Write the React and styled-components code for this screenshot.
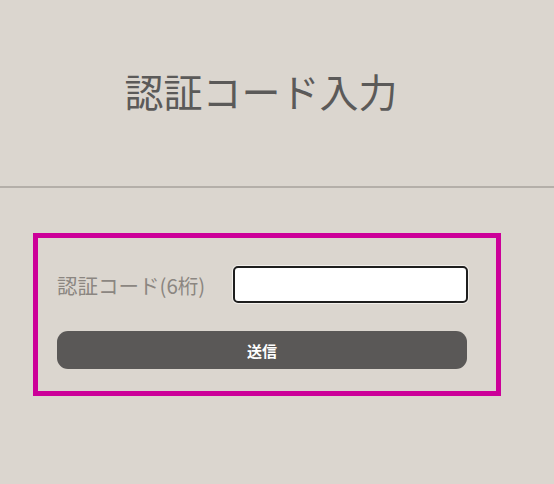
import React from 'react';
import styled, { createGlobalStyle } from 'styled-components';

const Global = createGlobalStyle`
    html, body {
        margin:0;
        padding:0;
        background-color:#dbd6cf;
    }
    body {
        font-family:"Noto Sans CJK JP", "Noto Sans", sans-serif;
    }
`

const Page = styled.div`
    width:554px;
    height:484px;
    background-color:#dbd6cf;
`

const Header = styled.div`
    height:186px;
    display:flex;
    align-items:center;
    justify-content:center;
    padding-right:32px;
    box-sizing:border-box;
`

const Title = styled.h1`
    margin:0;
    font-size:39px;
    font-weight:400;
    line-height:1;
    color:#5b5a59;
    transform:translateY(-3px);
`

const Divider = styled.div`
    height:2px;
    background-color:#b4afa9;
`

const Frame = styled.div`
    margin:45px 0 0 33px;
    width:468px;
    height:163px;
    box-sizing:border-box;
    border:5px solid #cc0099;
    padding:28px 29px 0 19px;
    display:flex;
    flex-direction:column;
    gap:28px;
`

const Row = styled.div`
    display:flex;
    align-items:center;
    justify-content:space-between;
    height:37px;
`

const Label = styled.label`
    font-size:20.5px;
    color:#8b8681;
    white-space:nowrap;
`

const Input = styled.input`
    width:235px;
    height:37px;
    box-sizing:border-box;
    border:2px solid #1e1e1e;
    border-radius:5px;
    background:#fff;
    box-shadow:0 0 0 1px #f2efeb;
    outline:none;
    margin-right:-1px;
`

const Button = styled.button`
    height:38px;
    border:none;
    border-radius:11px;
    background-color:#5a5857;
    color:#fff;
    font-family:"Noto Sans CJK JP", sans-serif;
    font-size:15px;
    font-weight:700;
    cursor:pointer;
`

const App = () => {
    return (
        <>
            <Global />
            <Page>
                <Header>
                    <Title>認証コード入力</Title>
                </Header>
                <Divider />
                <Frame>
                    <Row>
                        <Label>認証コード(6桁)</Label>
                        <Input type='text' />
                    </Row>
                    <Button>送信</Button>
                </Frame>
            </Page>
        </>
    )
}
export default App;
